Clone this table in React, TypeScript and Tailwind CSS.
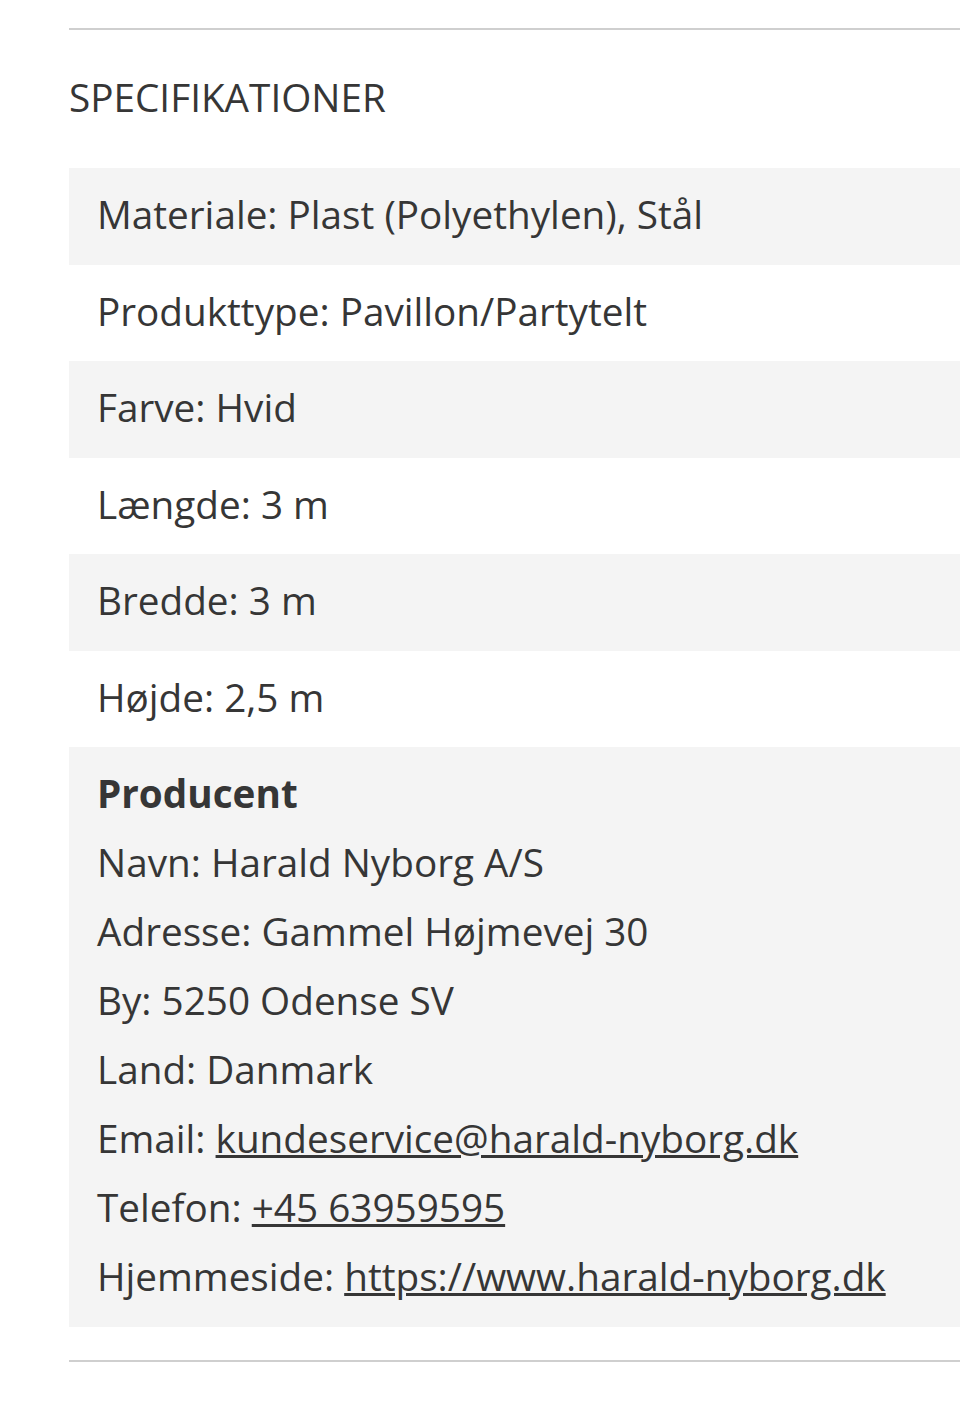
const specs = [
  'Materiale: Plast (Polyethylen), Stål',
  'Produkttype: Pavillon/Partytelt',
  'Farve: Hvid',
  'Længde: 3 m',
  'Bredde: 3 m',
  'Højde: 2,5 m',
]

export default function App() {
  return (
    <div className="min-h-[1410px] bg-white pl-[69px] pt-[28px] text-[#363636] font-['Open_Sans',sans-serif] text-[38.7px]">
      <div className="border-t-2 border-[#cfcfcf]">
        <h2 className="mt-[33px] mb-[36px] leading-[69px] font-normal">SPECIFIKATIONER</h2>

        <div>
          {specs.map((s, i) => (
            <div
              key={s}
              className={`h-[96.5px] flex items-center pl-[28px] pb-[4px] ${i % 2 === 0 ? 'bg-[#f4f4f4]' : 'bg-white'}`}
            >
              {s}
            </div>
          ))}

          <div className="bg-[#f4f4f4] pl-[28px] pt-[12px] pb-[16px] leading-[69px]">
            <div className="font-bold">Producent</div>
            <div>Navn: Harald Nyborg A/S</div>
            <div>Adresse: Gammel Højmevej 30</div>
            <div>By: 5250 Odense SV</div>
            <div>Land: Danmark</div>
            <div>
              Email: <a href="#" className="underline">kundeservice@harald-nyborg.dk</a>
            </div>
            <div>
              Telefon: <a href="#" className="underline">+45 63959595</a>
            </div>
            <div>
              Hjemmeside: <a href="#" className="underline">https://www.harald-nyborg.dk</a>
            </div>
          </div>
        </div>

        <div className="mt-[33px] border-t-2 border-[#cfcfcf]" />
      </div>
    </div>
  )
}
